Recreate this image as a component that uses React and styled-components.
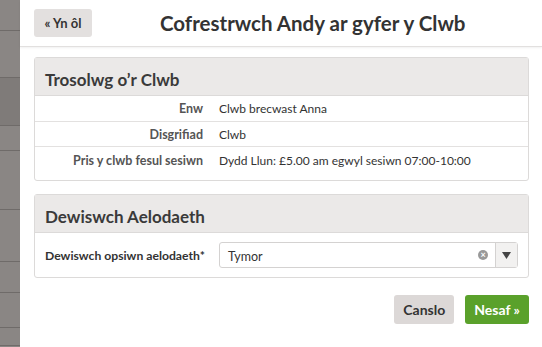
import React from 'react'
import styled, { createGlobalStyle } from 'styled-components'

const GlobalStyle = createGlobalStyle`
  html, body { margin: 0; padding: 0; background: #fff; }
  body { font-family: Lato, "Open Sans", sans-serif; color: #333; }
  *, *::before, *::after { box-sizing: border-box; }
`

const Page = styled.div`
  display: flex;
  width: 542px;
  height: 347px;
  overflow: hidden;
`

const Sidebar = styled.div`
  width: 20px;
  flex-shrink: 0;
  background: #8a8684;
  display: flex;
  flex-direction: column;
`

const NavItem = styled.div`
  height: ${p => p.h}px;
  flex-shrink: 0;
  background: ${p => (p.active ? '#7f7b79' : '#8a8684')};
  border-bottom: 1px solid #6f6b69;
`

const Main = styled.div`
  flex: 1;
  display: flex;
  flex-direction: column;
`

const Header = styled.div`
  height: 47px;
  display: flex;
  align-items: center;
  padding: 0 14px 1px;
  border-bottom: 1px solid #e2e0df;
  box-shadow: 0 1px 2px rgba(0, 0, 0, 0.06);
`

const BackButton = styled.button`
  width: 58px;
  height: 28px;
  padding: 0;
  border: none;
  border-radius: 3px;
  background: #e3e0df;
  color: #333;
  font-family: inherit;
  font-size: 13px;
  font-weight: 700;
`

const Title = styled.h1`
  margin: 0 0 0 68px;
  font-size: 20.5px;
  font-weight: 700;
  color: #333;
  white-space: nowrap;
`

const Content = styled.div`
  padding: 10px 13px 0 14px;
  display: flex;
  flex-direction: column;
  gap: 13px;
`

const Panel = styled.section`
  border: 1px solid #dcdad9;
  border-radius: 3px;
  background: #fff;
`

const PanelHead = styled.div`
  height: 38px;
  background: #ebe9e8;
  border-bottom: 1px solid #dcdad9;
  display: flex;
  align-items: center;
  padding: 5px 10px 0;
  font-size: 17px;
  font-weight: 700;
  color: #3a3a3a;
`

const InfoRow = styled.div`
  display: grid;
  grid-template-columns: 168px 1fr;
  column-gap: 16px;
  align-items: center;
  height: ${p => p.h}px;
  border-bottom: ${p => (p.last ? 'none' : '1px solid #e3e1e0')};
  font-size: 12px;
  padding-bottom: ${p => (p.last ? '6px' : '0')};
`

const Label = styled.div`
  text-align: right;
  font-weight: 700;
  font-size: 12.5px;
  color: #555;
`

const Value = styled.div`
  color: #333;
`

const FormRow = styled.div`
  display: flex;
  align-items: center;
  padding: 9px 10px 9px 10px;
  gap: 10px;
`

const FormLabel = styled.div`
  width: 164px;
  font-size: 12.2px;
  font-weight: 700;
  color: #333;
`

const Select = styled.div`
  flex: 1;
  height: 26px;
  border: 1px solid #d4d2d1;
  border-radius: 3px;
  display: flex;
  align-items: center;
  font-size: 12.5px;
`

const SelectValue = styled.div`
  flex: 1;
  padding-left: 8px;
  padding-top: 2px;
`

const ClearIcon = styled.span`
  width: 10px;
  height: 10px;
  border-radius: 50%;
  background: #999;
  color: #fff;
  font-size: 9px;
  line-height: 10px;
  text-align: center;
  margin-right: 7px;
  font-weight: 700;
`

const Arrow = styled.div`
  width: 22px;
  height: 100%;
  border-left: 1px solid #d4d2d1;
  background: #f2f1f0;
  display: flex;
  align-items: center;
  justify-content: center;
`

const Actions = styled.div`
  display: flex;
  justify-content: flex-end;
  gap: 11px;
  padding-top: 4px;
`

const ActionButton = styled.button`
  height: 29px;
  padding: 0 9px;
  border: none;
  border-radius: 3px;
  font-family: inherit;
  font-size: 14px;
  font-weight: 700;
  color: ${p => (p.primary ? '#fff' : '#333')};
  background: ${p => (p.primary ? '#5aa12b' : '#dcd8d7')};
`

const navHeights = [31, 47, 48, 25, 59, 52, 31, 35, 18]

export default function App() {
  return (
    <Page>
      <GlobalStyle />
      <Sidebar>
        {navHeights.map((h, i) => (
          <NavItem key={i} h={h} active={i === 2} />
        ))}
      </Sidebar>
      <Main>
        <Header>
          <BackButton>« Yn ôl</BackButton>
          <Title>Cofrestrwch Andy ar gyfer y Clwb</Title>
        </Header>
        <Content>
          <Panel>
            <PanelHead>Trosolwg o’r Clwb</PanelHead>
            <InfoRow h={26}>
              <Label>Enw</Label>
              <Value>Clwb brecwast Anna</Value>
            </InfoRow>
            <InfoRow h={25}>
              <Label>Disgrifiad</Label>
              <Value>Clwb</Value>
            </InfoRow>
            <InfoRow h={33} last>
              <Label>Pris y clwb fesul sesiwn</Label>
              <Value>Dydd Llun: £5.00 am egwyl sesiwn 07:00-10:00</Value>
            </InfoRow>
          </Panel>
          <Panel>
            <PanelHead>Dewiswch Aelodaeth</PanelHead>
            <FormRow>
              <FormLabel>Dewiswch opsiwn aelodaeth*</FormLabel>
              <Select>
                <SelectValue>Tymor</SelectValue>
                <ClearIcon>×</ClearIcon>
                <Arrow>
                  <svg width="9" height="7" viewBox="0 0 9 7">
                    <path d="M0 0 H9 L4.5 7 Z" fill="#444" />
                  </svg>
                </Arrow>
              </Select>
            </FormRow>
          </Panel>
          <Actions>
            <ActionButton>Canslo</ActionButton>
            <ActionButton primary>Nesaf »</ActionButton>
          </Actions>
        </Content>
      </Main>
    </Page>
  )
}
